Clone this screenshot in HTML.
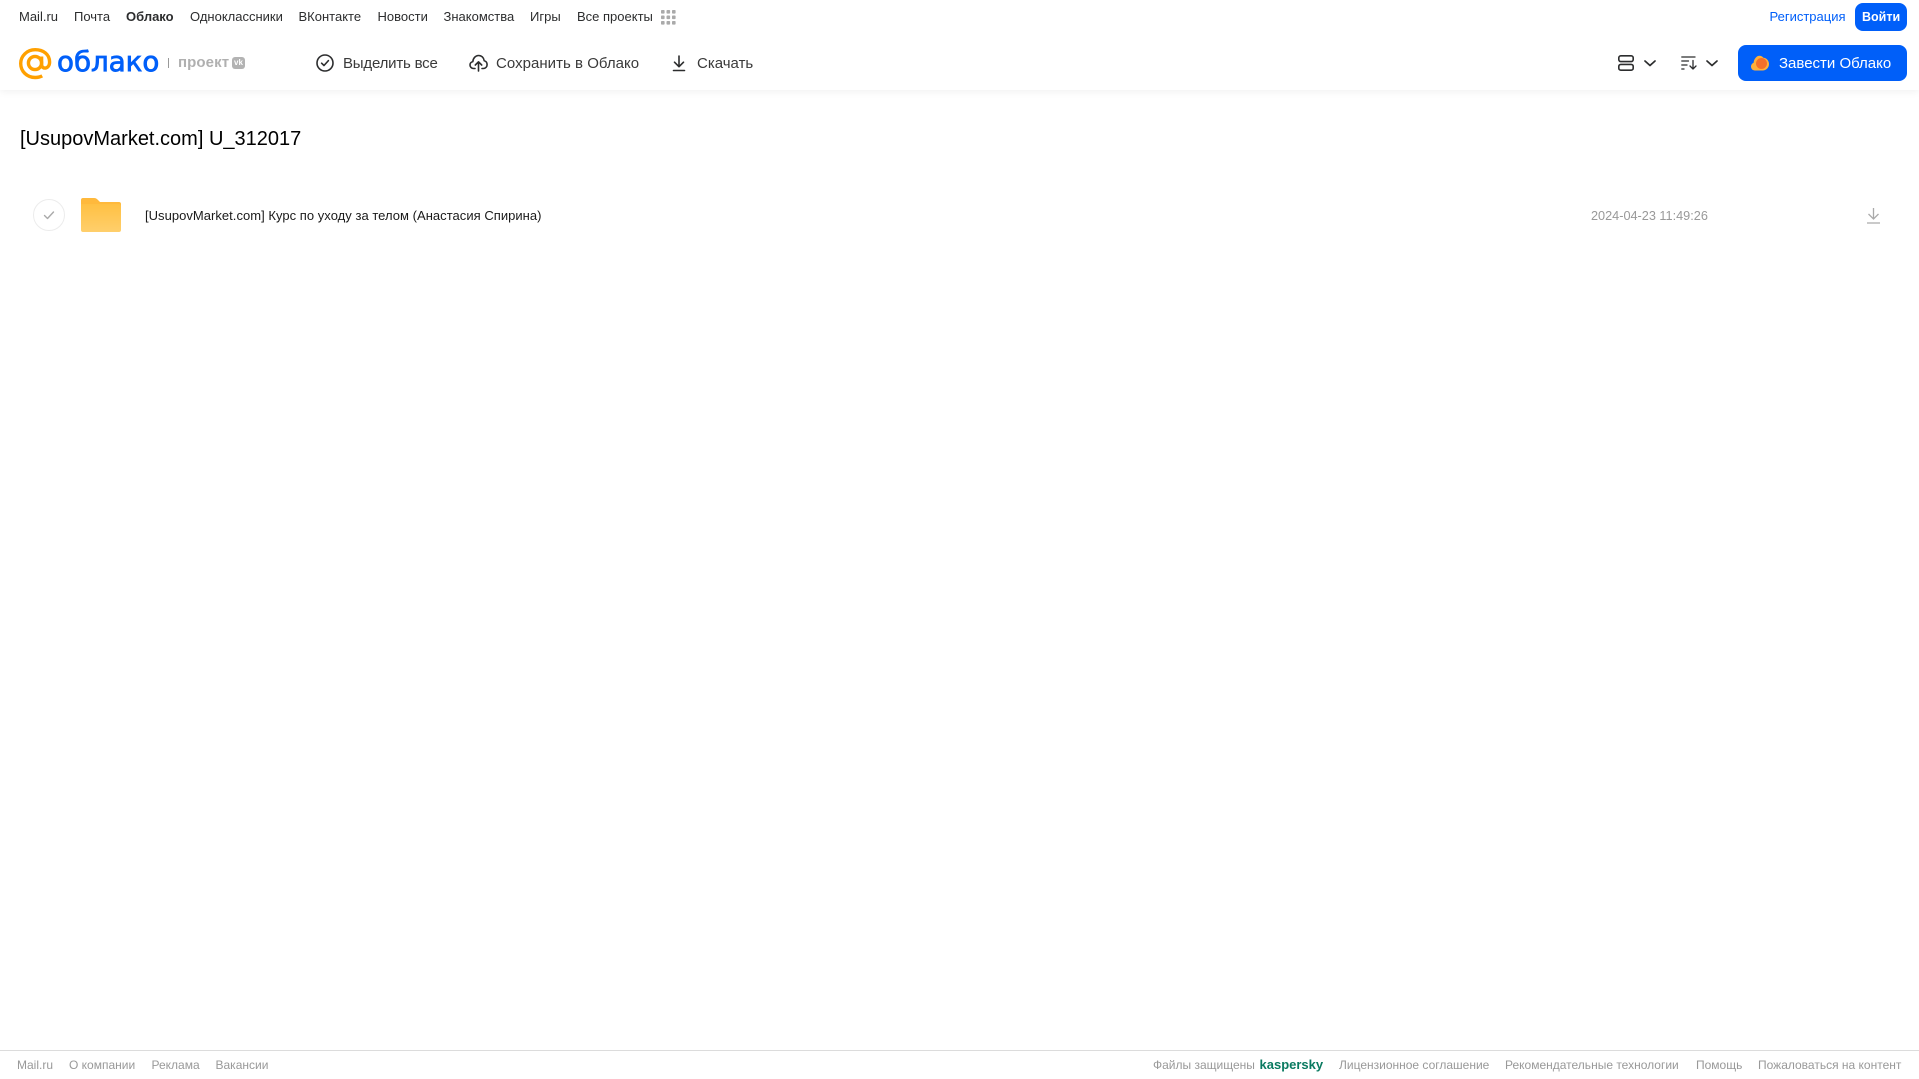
<!DOCTYPE html>
<html lang="ru">
<head>
<meta charset="utf-8">
<title>Облако</title>
<style>
html,body{margin:0;padding:0;background:#fff;}
body{width:1919px;height:1079px;position:relative;overflow:hidden;font-family:"Liberation Sans",sans-serif;}
.t{position:absolute;white-space:nowrap;line-height:20px;height:20px;}
.n{top:7px;font-size:13px;color:#2c2d2e;}
.h{top:53.500px;font-size:15px;color:#3a3a3a;}
.f{top:1055px;font-size:12px;color:#999;}
svg{position:absolute;overflow:visible;}
#hdr{position:absolute;left:0;top:0;width:1919px;height:90px;background:#fff;box-shadow:0 1px 8px rgba(0,0,0,.07);}
#ln{position:absolute;left:0;top:1050px;width:1919px;height:1px;background:#dcdcdc;}
.btn{position:absolute;background:#005ff9;}
</style>
</head>
<body>
<div id="hdr"></div>

<span class="t n" style="left:19px">Mail.ru</span>
<span class="t n" style="left:74px">Почта</span>
<span class="t n" style="left:126px;font-weight:bold">Облако</span>
<span class="t n" style="left:190px">Одноклассники</span>
<span class="t n" style="left:298.500px">ВКонтакте</span>
<span class="t n" style="left:377.500px">Новости</span>
<span class="t n" style="left:443.500px">Знакомства</span>
<span class="t n" style="left:530px">Игры</span>
<span class="t n" style="left:577px">Все проекты</span>
<svg style="left:661px;top:10px" width="15" height="15" viewBox="0 0 15 15" fill="#aaa">
<rect x="0" y="0" width="3.6" height="3.6" rx=".8"/><rect x="5.5" y="0" width="3.6" height="3.6" rx=".8"/><rect x="11" y="0" width="3.6" height="3.6" rx=".8"/>
<rect x="0" y="5.5" width="3.6" height="3.6" rx=".8"/><rect x="5.5" y="5.5" width="3.6" height="3.6" rx=".8"/><rect x="11" y="5.5" width="3.6" height="3.6" rx=".8"/>
<rect x="0" y="11" width="3.6" height="3.6" rx=".8"/><rect x="5.5" y="11" width="3.6" height="3.6" rx=".8"/><rect x="11" y="11" width="3.6" height="3.6" rx=".8"/>
</svg>

<span class="t n" style="left:1769.500px;color:#005ff9">Регистрация</span>
<div class="btn" style="left:1855px;top:3px;width:52px;height:28px;border-radius:8px"></div>
<span class="t n" style="left:1862px;color:#fff;font-weight:bold;font-size:12.500px">Войти</span>

<!-- logo -->
<svg style="left:19px;top:48px" width="33" height="32" viewBox="0 0 33 32" fill="none" stroke="#ffa000" stroke-width="3.4">
<circle cx="16" cy="15" r="6.6"/>
<path d="M22.6 8.5V16.5c0 5.2 8 5 8-2.500C30.6 6.2 24.2 1.7 16.2 1.7 8 1.7 1.7 8 1.7 15.5c0 8 6.4 14 14.500 14 2.800 0 5-.5 7-1.600"/>
</svg>
<span style="position:absolute;left:57px;top:44px;line-height:36px;font-family:'DejaVu Sans',sans-serif;font-size:27.700px;color:#005ff9;-webkit-text-stroke:.8px #005ff9;white-space:nowrap">облако</span>
<div style="position:absolute;left:168px;top:58px;width:1px;height:10px;background:#999"></div>
<span class="t" style="left:178px;top:53px;font-size:15px;font-weight:bold;color:#b0b0b0;letter-spacing:.1px">проект</span>
<div style="position:absolute;left:232px;top:57px;width:13px;height:12px;border-radius:3px;background:#b3b3b3"></div>
<span class="t" style="left:234px;top:53px;font-size:8px;font-weight:bold;color:#fff">vk</span>

<!-- toolbar -->
<svg style="left:316px;top:54px" width="18" height="18" viewBox="0 0 18 18" fill="none" stroke="#2c2d2e" stroke-width="1.6" stroke-linecap="round" stroke-linejoin="round">
<circle cx="9" cy="9" r="8"/><path d="M5.6 9.2 8 11.500 12.400 6.600"/>
</svg>
<span class="t h" style="left:343px;letter-spacing:-.2px">Выделить все</span>

<svg style="left:469px;top:54px" width="19" height="18" viewBox="0 0 19 18" fill="none" stroke="#2c2d2e" stroke-width="1.6" stroke-linecap="round" stroke-linejoin="round">
<path d="M6 14.500H4.600C2.400 14.500 1 12.800 1 11c0-1.700 1.100-3 2.800-3.400C4.200 4 6.600 1.500 9.600 1.500c3 0 5.200 2.200 5.600 5.200 1.800.4 2.900 2.100 2.900 3.900 0 2.200-1.600 3.900-3.700 3.900H13"/>
<path d="M9.500 17V8M6.300 11 9.500 7.800 12.700 11"/>
</svg>
<span class="t h" style="left:496px;letter-spacing:.03px">Сохранить в Облако</span>

<svg style="left:672px;top:55px" width="14" height="17" viewBox="0 0 14 17" fill="none" stroke="#2c2d2e" stroke-width="1.6" stroke-linecap="round" stroke-linejoin="round">
<path d="M7 1V11.500M2.500 7.200 7 11.700 11.500 7.200M1.500 15.500H12.500"/>
</svg>
<span class="t h" style="left:697px">Скачать</span>

<svg style="left:1618px;top:55px" width="16" height="16" viewBox="0 0 16 16" fill="none" stroke="#2c2d2e" stroke-width="1.6">
<rect x=".8" y=".8" width="14.400" height="5.800" rx="2"/><rect x=".8" y="9.400" width="14.400" height="5.800" rx="2"/>
</svg>
<svg style="left:1644px;top:60px" width="12" height="7" viewBox="0 0 12 7" fill="none" stroke="#2c2d2e" stroke-width="1.7" stroke-linecap="round" stroke-linejoin="round"><path d="M1 1 6 5.500 11 1"/></svg>
<svg style="left:1681px;top:56px" width="16" height="14" viewBox="0 0 16 14" fill="none" stroke="#2c2d2e" stroke-width="1.300" stroke-linecap="round" stroke-linejoin="round">
<path d="M.8 1H14M.8 5H7.500M.8 9H6M.8 13H3M12 4.500V13M9 10 12 13 15 10"/>
</svg>
<svg style="left:1706px;top:60px" width="12" height="7" viewBox="0 0 12 7" fill="none" stroke="#2c2d2e" stroke-width="1.7" stroke-linecap="round" stroke-linejoin="round"><path d="M1 1 6 5.500 11 1"/></svg>

<div class="btn" style="left:1738px;top:45px;width:169px;height:36px;border-radius:8px"></div>
<svg style="left:1751px;top:55px" width="18" height="16" viewBox="0 0 18 16">
<path fill="#ffb03a" d="M4 15.500C1.600 15.500 0 13.700 0 11.500c0-1.800 1-3.200 2.600-3.800C3 4 5.500.8 8.500.8c1.500 0 2.800.7 3.700 1.800 3.200.3 5.800 3 5.800 6.400 0 3.700-2.800 6.500-6.300 6.500z"/>
<circle cx="10.500" cy="8.500" r="5.500" fill="#f4702a"/>
</svg>
<span class="t" style="left:1779px;top:53.500px;font-size:15px;color:#fff">Завести Облако</span>

<!-- title -->
<span class="t" style="left:20px;top:126px;font-size:20px;line-height:26px;height:26px;color:#000">[UsupovMarket.com] U_312017</span>

<!-- row -->
<svg style="left:33px;top:199px" width="32" height="32" viewBox="0 0 32 32" fill="none">
<circle cx="16" cy="16" r="15.500" stroke="#ececec"/>
<path d="M11.500 16.500 14.500 19.500 20.500 13" stroke="#aaa" stroke-width="1.400" stroke-linecap="round" stroke-linejoin="round"/>
</svg>
<svg style="left:81px;top:198px" width="40" height="34" viewBox="0 0 40 34">
<defs><linearGradient id="fg" x1="0" y1="0" x2="0" y2="1"><stop offset="0" stop-color="#ffc043"/><stop offset="1" stop-color="#ffcf6c"/></linearGradient></defs>
<path fill="#ffb93c" d="M2 0H13c2 0 3 1 4 2l2 2H38c1.200 0 2 .8 2 2v6H0V2C0 .8.800 0 2 0z"/>
<path fill="url(#fg)" d="M0 6H38c1.200 0 2 .8 2 2V32c0 1.200-.8 2-2 2H2c-1.200 0-2-.8-2-2z"/>
</svg>
<span class="t" style="left:145px;top:206px;font-size:13px;letter-spacing:.03px;color:#1a1a1a">[UsupovMarket.com] Курс по уходу за телом (Анастасия Спирина)</span>
<span class="t" style="left:1591px;top:206px;font-size:12.700px;color:#999">2024-04-23 11:49:26</span>
<svg style="left:1867px;top:207px" width="13" height="17" viewBox="0 0 13 17" fill="none" stroke="#aaa" stroke-width="1.300">
<path d="M6.500 1V12M1.500 7 6.500 12 11.500 7M0 16H13"/>
</svg>

<!-- footer -->
<div id="ln"></div>
<span class="t f" style="left:17px">Mail.ru</span>
<span class="t f" style="left:69px">О компании</span>
<span class="t f" style="left:151.500px">Реклама</span>
<span class="t f" style="left:215.500px">Вакансии</span>
<span class="t f" style="left:1153px">Файлы защищены</span>
<span class="t f" style="left:1259.500px;font-size:13px;font-weight:bold;color:#0a7a60">kaspersky</span>
<span class="t f" style="left:1339px">Лицензионное соглашение</span>
<span class="t f" style="left:1505px">Рекомендательные технологии</span>
<span class="t f" style="left:1696px">Помощь</span>
<span class="t f" style="left:1758px">Пожаловаться на контент</span>
</body>
</html>
